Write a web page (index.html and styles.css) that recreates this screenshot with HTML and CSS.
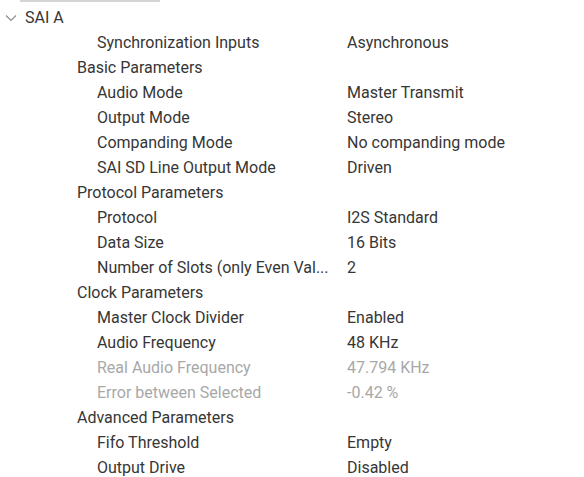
FILE: index.html
```html
<!DOCTYPE html>
<html>
<head>
<meta charset="utf-8">
<link rel="stylesheet" href="styles.css">
</head>
<body>
<div class="topline"></div>
<div class="tree">
  <div class="row root">
    <svg class="chev" width="12" height="8" viewBox="0 0 12 8"><path d="M1 1.5 L6 6.5 L11 1.5" fill="none" stroke="#8a8a8a" stroke-width="1.1"/></svg>
    <span class="label">SAI A</span>
  </div>
  <div class="row l2"><span class="label">Synchronization Inputs</span><span class="value">Asynchronous</span></div>
  <div class="row l1"><span class="label">Basic Parameters</span></div>
  <div class="row l2"><span class="label">Audio Mode</span><span class="value">Master Transmit</span></div>
  <div class="row l2"><span class="label">Output Mode</span><span class="value">Stereo</span></div>
  <div class="row l2"><span class="label">Companding Mode</span><span class="value">No companding mode</span></div>
  <div class="row l2"><span class="label">SAI SD Line Output Mode</span><span class="value">Driven</span></div>
  <div class="row l1"><span class="label">Protocol Parameters</span></div>
  <div class="row l2"><span class="label">Protocol</span><span class="value">I2S Standard</span></div>
  <div class="row l2"><span class="label">Data Size</span><span class="value">16 Bits</span></div>
  <div class="row l2"><span class="label">Number of Slots (only Even Val...</span><span class="value">2</span></div>
  <div class="row l1"><span class="label">Clock Parameters</span></div>
  <div class="row l2"><span class="label">Master Clock Divider</span><span class="value">Enabled</span></div>
  <div class="row l2"><span class="label">Audio Frequency</span><span class="value">48 KHz</span></div>
  <div class="row l2 dim"><span class="label">Real Audio Frequency</span><span class="value">47.794 KHz</span></div>
  <div class="row l2 dim"><span class="label">Error between Selected</span><span class="value">-0.42 %</span></div>
  <div class="row l1"><span class="label">Advanced Parameters</span></div>
  <div class="row l2"><span class="label">Fifo Threshold</span><span class="value">Empty</span></div>
  <div class="row l2"><span class="label">Output Drive</span><span class="value">Disabled</span></div>
</div>
</body>
</html>
```
FILE: styles.css
```css
html, body {
  margin: 0;
  padding: 0;
  background: #ffffff;
}
body {
  font-family: Roboto, "Liberation Sans", Arial, sans-serif;
  font-size: 16px;
  color: #363636;
  width: 584px;
  height: 477px;
  overflow: hidden;
}
.topline {
  margin-left: 20px;
  width: 140px;
  height: 2px;
  background: #d4d4d4;
}
.tree {
  display: flex;
  flex-direction: column;
  padding-top: 3px;
}
.row {
  display: flex;
  align-items: center;
  height: 25px;
}
.root {
  padding-left: 5px;
}
.chev {
  margin-right: 8px;
}
.l1 .label {
  width: 270px;
  padding-left: 77px;
}
.l2 .label {
  width: 250px;
  padding-left: 97px;
}
.label {
  white-space: nowrap;
}
.value {
  white-space: nowrap;
}
.dim {
  color: #a8a8a8;
}
```
